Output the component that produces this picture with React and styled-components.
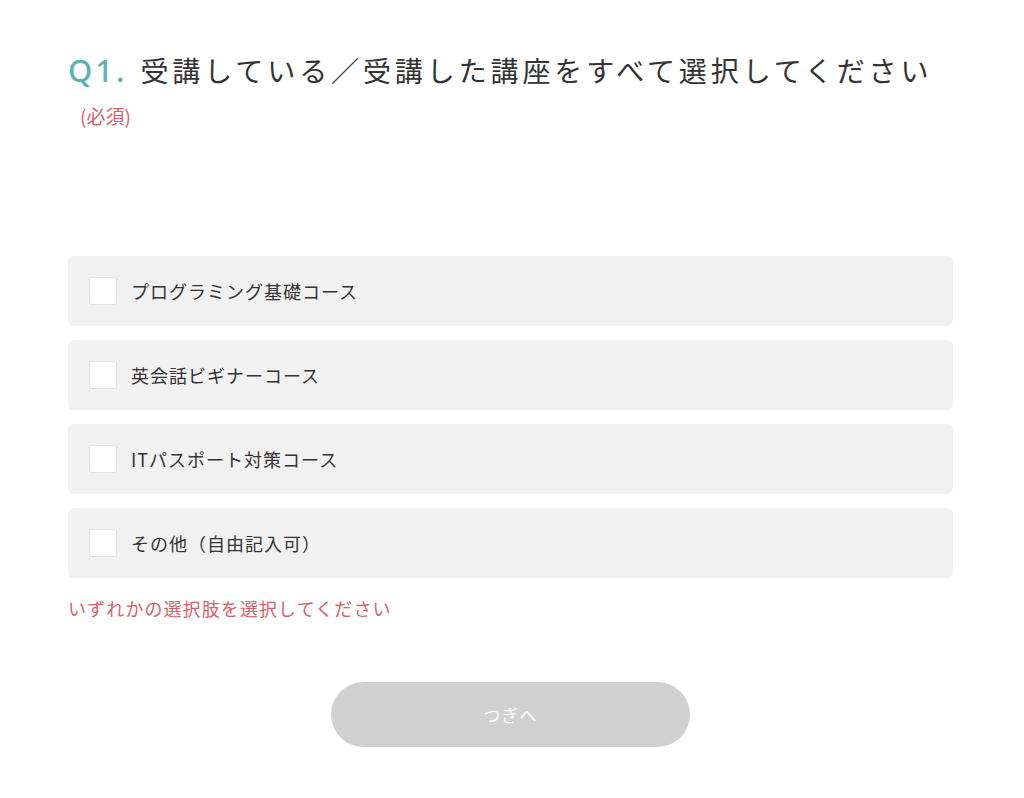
import React from 'react';
import styled, { createGlobalStyle } from 'styled-components';

const GlobalStyle = createGlobalStyle`
    body {
        margin: 0;
        background: #ffffff;
        font-family: "Noto Sans CJK JP", "Noto Sans", sans-serif;
        color: #333333;
    }
`;

const options = [
    'プログラミング基礎コース',
    '英会話ビギナーコース',
    'ITパスポート対策コース',
    'その他（自由記入可）',
];

function App() {
    return (
        <>
            <GlobalStyle />
            <Page>
                <Title>
                    <Num>Q1.</Num>
                    <span>受講している／受講した講座をすべて選択してください</span>
                </Title>
                <Required>(必須)</Required>

                <OptionList>
                    {options.map((label) => (
                        <Option key={label}>
                            <Box />
                            <Label>{label}</Label>
                        </Option>
                    ))}
                </OptionList>

                <Error>いずれかの選択肢を選択してください</Error>

                <Footer>
                    <NextBtn disabled>つぎへ</NextBtn>
                </Footer>
            </Page>
        </>
    );
}

export default App;

const Page = styled.div`
    width: 885px;
    padding: 50px 0 0 68px;
`;

const Title = styled.h1`
    margin: 0;
    display: flex;
    align-items: baseline;
    font-size: 28px;
    line-height: 40px;
    font-weight: 400;
    letter-spacing: 3.9px;
    color: #333333;
    white-space: nowrap;
`;

const Num = styled.span`
    color: #5cb2ac;
    font-family: "Noto Sans", "Noto Sans CJK JP", sans-serif;
    font-size: 31px;
    font-weight: 500;
    letter-spacing: 3px;
    margin-right: 13px;
`;

const Required = styled.div`
    margin: 14px 0 0 12px;
    font-size: 19px;
    line-height: 24px;
    color: #d85f68;
`;

const OptionList = styled.div`
    display: flex;
    flex-direction: column;
    gap: 14px;
    margin-top: 128px;
`;

const Option = styled.label`
    display: flex;
    align-items: center;
    height: 70px;
    padding: 0 21px;
    border-radius: 6px;
    background: #f1f1f1;
    box-sizing: border-box;
`;

const Box = styled.span`
    width: 28px;
    height: 28px;
    box-sizing: border-box;
    background: #ffffff;
    border: 1px solid #e4e4e4;
    border-radius: 2px;
    flex-shrink: 0;
`;

const Label = styled.span`
    margin-left: 14px;
    font-size: 18px;
    letter-spacing: 1px;
    color: #333333;
`;

const Error = styled.p`
    margin: 18px 0 0;
    font-size: 18px;
    line-height: 24px;
    letter-spacing: 1.1px;
    color: #d85f68;
`;

const Footer = styled.div`
    display: flex;
    justify-content: center;
    margin-top: 62px;
`;

const NextBtn = styled.button`
    width: 359px;
    height: 65px;
    border: none;
    border-radius: 33px;
    background: #d0d0d0;
    color: #ffffff;
    font-family: "Noto Sans CJK JP", sans-serif;
    font-size: 17px;
    letter-spacing: 1px;
`;
